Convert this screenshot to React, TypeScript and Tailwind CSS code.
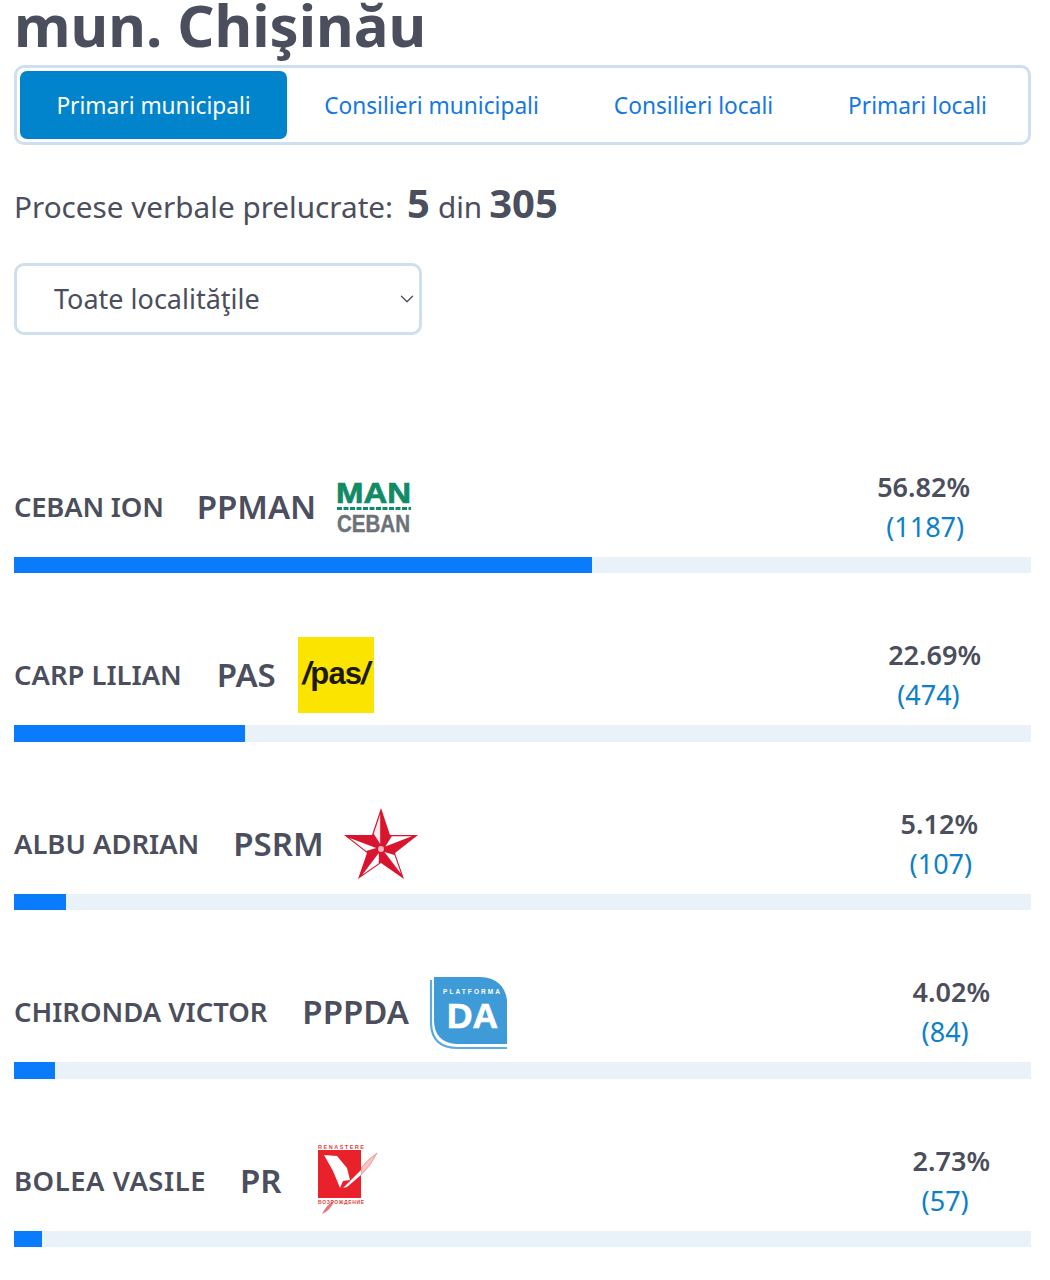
import React from 'react';
import { ChevronDown } from 'lucide-react';

const tabs = [
  { label: 'Primari municipali', width: 'w-[267px]', active: true },
  { label: 'Consilieri municipali', width: 'w-[289px]', active: false },
  { label: 'Consilieri locali', width: 'w-[235px]', active: false },
  { label: 'Primari locali', width: 'w-[213px]', active: false },
];

const ManLogo = () => (
  <svg width="76" height="54" viewBox="0 0 76 54" className="overflow-visible">
    <text x="0" y="23" fontFamily="Liberation Sans" fontWeight="700" fontSize="29" fill="#118a66" stroke="#118a66" strokeWidth="0.7" textLength="75" lengthAdjust="spacingAndGlyphs">MAN</text>
    <line x1="1" y1="28.5" x2="75" y2="28.5" stroke="#118a66" strokeWidth="3" strokeDasharray="5 1.5" />
    <text x="1" y="52" fontFamily="Liberation Sans" fontWeight="700" fontSize="23" fill="#6b7378" stroke="#6b7378" strokeWidth="0.4" textLength="73" lengthAdjust="spacingAndGlyphs">CEBAN</text>
  </svg>
);

const PasLogo = () => (
  <div className="w-[76px] h-[76px] bg-[#fbe500] flex items-center justify-center">
    <span className="font-['Liberation_Sans'] font-bold text-[31px] tracking-[-0.8px] text-[#1c1a10] -mt-[2px]">
      <span className="italic">/</span>pas<span className="italic">/</span>
    </span>
  </div>
);

const StarLogo = () => (
  <svg width="76" height="72" viewBox="0 0 76 72">
    <polygon points="38,0 47,27 75,27 52,45 61,71 38,55 15,71 24,45 1,27 29,27" fill="#d8142e" />
    <polygon points="37.2,35.9 37.2,6.2 30.7,25.8" fill="#fbe9eb" />
    <polygon points="42.3,38.4 68.9,28.3 48.8,28.3" fill="#ffffff" />
    <polygon points="41.4,44.1 58,65.7 51.5,47" fill="#ffffff" />
    <polygon points="35.8,45.1 19.3,66.7 35.8,55.2" fill="#ffffff" />
    <polygon points="33.2,40.1 6.6,30 23.2,43" fill="#ffffff" />
    <circle cx="38" cy="41" r="3" fill="#f4b6bf" />
  </svg>
);

const DaLogo = () => (
  <svg width="100" height="85" viewBox="0 0 100 85">
    <path d="M11 10 V54 Q12 78 38 78 H87" fill="none" stroke="#5cabe0" strokeWidth="2.2" />
    <path d="M14 7 H60 Q84 8 87 30 V74 H36 Q14 72 14 50 Z" fill="#3f9ad8" />
    <text x="23" y="24" fontFamily="Liberation Sans" fontWeight="700" fontSize="6.5" fill="#ffffff" textLength="57" lengthAdjust="spacing">PLATFORMA</text>
    <text x="27" y="58" fontFamily="Liberation Sans" fontWeight="700" fontSize="35" fill="#ffffff" stroke="#ffffff" strokeWidth="0.7" textLength="51" lengthAdjust="spacingAndGlyphs">DA</text>
  </svg>
);

const PrLogo = () => (
  <svg width="80" height="85" viewBox="0 0 80 85">
    <text x="13" y="10.5" fontFamily="Liberation Sans" fontWeight="700" fontSize="5.5" fill="#d8433f" textLength="46" lengthAdjust="spacing">RENASTERE</text>
    <path d="M72 15 Q62 22 56 30 L56 37 Q66 28 72 15 Z" fill="#f7c4c4" stroke="#e8737a" strokeWidth="0.6" />
    <rect x="13" y="12" width="43" height="48" fill="#e8212a" />
    <path d="M19 17 L32 18 L42 30 L45 42 L38 43 L35 50 L33 45 L28 33 Z" fill="#fff" />
    <path d="M56 32 L38 50 L42 49 L56 37 Z" fill="#fff" />
    <path d="M17 76 Q22 66 29 63 Q26 72 17 76 Z" fill="#e8737a" />
    <text x="13" y="65.5" fontFamily="Liberation Sans" fontWeight="700" fontSize="5" fill="#d8433f" textLength="46" lengthAdjust="spacing">ВОЗРОЖДЕНИЕ</text>
  </svg>
);

const rows = [
  { name: 'CEBAN ION', party: 'PPMAN', pct: 56.82, votes: 1187, logo: <ManLogo />, nameFit: 'tracking-[-0.2px]', partyGap: '-ml-[2px] mr-[20px]', right: 'mr-[61px]' },
  { name: 'CARP LILIAN', party: 'PAS', pct: 22.69, votes: 474, logo: <PasLogo />, nameFit: 'tracking-normal', partyGap: 'mr-[22px]', right: 'mr-[50px]' },
  { name: 'ALBU ADRIAN', party: 'PSRM', pct: 5.12, votes: 107, logo: <StarLogo />, nameFit: 'tracking-normal', partyGap: '-ml-[1px] mr-[19px]', right: 'mr-[53px]' },
  { name: 'CHIRONDA VICTOR', party: 'PPPDA', pct: 4.02, votes: 84, logo: <DaLogo />, nameFit: 'tracking-normal', partyGap: 'mr-[11px]', right: 'mr-[41px]' },
  { name: 'BOLEA VASILE', party: 'PR', pct: 2.73, votes: 57, logo: <PrLogo />, nameFit: 'tracking-[0.55px]', partyGap: '-ml-[1px] mr-[23px]', right: 'mr-[41px]' },
];

export default function App() {
  return (
    <div className="w-[1050px] h-[1280px] overflow-hidden bg-white pl-[14px] pr-[19px] font-['Noto_Sans',sans-serif] text-[#4b4e5c]">
      <h1 className="text-[58px] leading-[60px] font-bold -mt-[5px] h-[70px]">mun. Chişinău</h1>

      <div className="flex h-[80px] border-[3px] border-[#cfdfee] rounded-[10px] p-[3px]">
        {tabs.map(tab => (
          <a
            key={tab.label}
            className={`${tab.width} flex items-center justify-center pt-[2px] rounded-[7px] text-[22.7px] ${tab.active ? 'bg-[#0284cc] text-white' : 'text-[#1577e0]'}`}
          >
            {tab.label}
          </a>
        ))}
      </div>

      <div className="flex items-baseline h-[50px] mt-[33px] text-[29.7px] leading-[50px]">
        <span>Procese verbale prelucrate:</span>
        <strong className="text-[40px] font-bold ml-[14px] mr-[8px]">5</strong>
        <span>din</span>
        <strong className="text-[40px] font-bold ml-[7px]">305</strong>
      </div>

      <div className="relative w-[408px] h-[72px] mt-[35px]">
        <select className="block w-full h-full appearance-none border-[3px] border-[#cfdfee] rounded-[10px] bg-white pl-[37px] text-[27px] text-[#4b4e5c]">
          <option>Toate localităţile</option>
        </select>
        <ChevronDown className="absolute right-[4px] top-[25px] w-[22px] h-[22px] text-[#4b4e5c] pointer-events-none" strokeWidth={1.4} />
      </div>

      <div className="mt-[131.5px]">
        {rows.map(row => (
          <div key={row.name} className="mb-[62px]">
            <div className="flex items-center justify-between h-[80px] mb-[10px]">
              <div className="flex items-center">
                <span className={`${row.nameFit} mr-[35px] text-[27.4px] font-semibold`}>{row.name}</span>
                <span className={`${row.partyGap} text-[33px] font-semibold`}>{row.party}</span>
                {row.logo}
              </div>
              <div className={`${row.right} flex flex-col items-start`}>
                <span className="text-[27px] leading-[40px] font-semibold">{row.pct.toFixed(2)}%</span>
                <span className="text-[27px] leading-[40px] ml-[9px] text-[#0d80c8]">({row.votes})</span>
              </div>
            </div>
            <div className="h-[16.5px] bg-[#e9f2f9]">
              <div className="h-full bg-[#0a7cfb]" style={{ width: `${row.pct}%` }} />
            </div>
          </div>
        ))}
      </div>
    </div>
  );
}
